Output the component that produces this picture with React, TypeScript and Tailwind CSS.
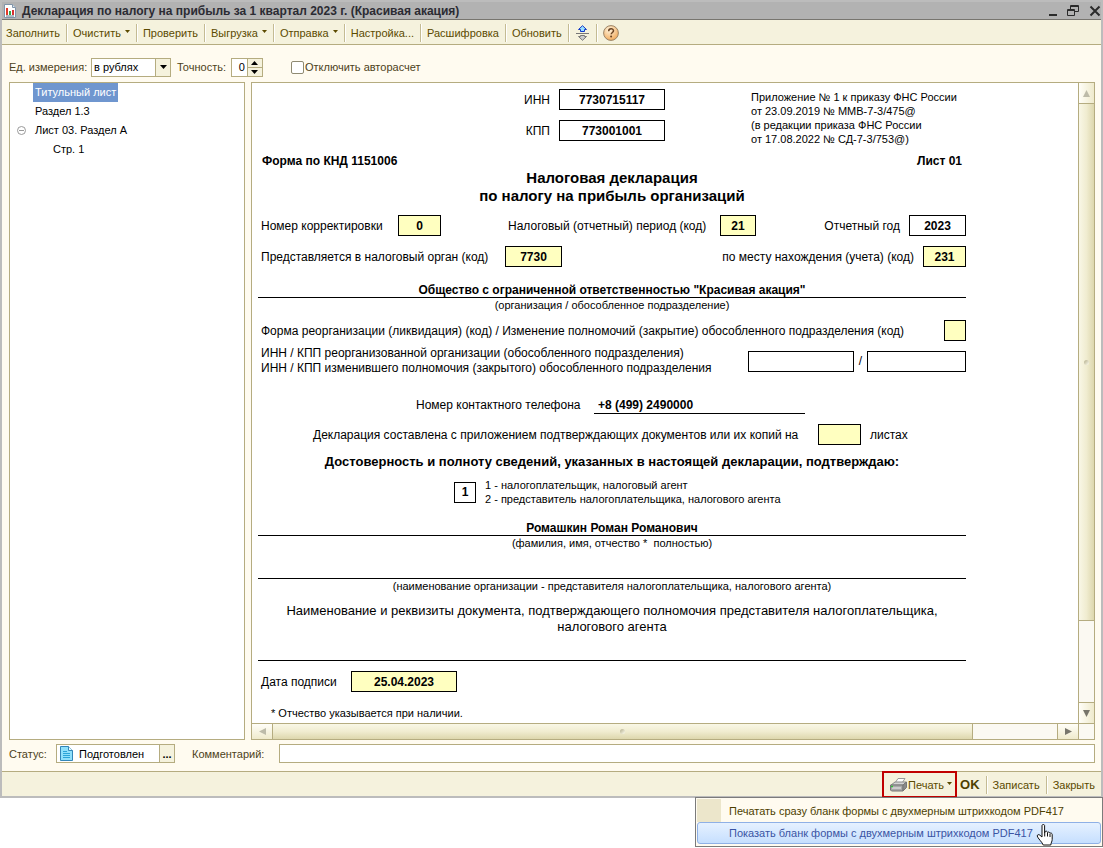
import React from 'react';

const Caret = () => (
  <svg className="mt-1 h-[3px] w-[5px] shrink-0 self-start fill-[#5b4a00]" viewBox="0 0 5 3">
    <path d="M0 0h5L2.5 3z" />
  </svg>
);

function ToolButton({ children, menu = false, last = false, label }: { children: React.ReactNode; menu?: boolean; last?: boolean; label?: string }) {
  return (
    <>
      <button aria-label={label} className="flex items-center gap-1 whitespace-nowrap pr-[6px] pl-[5px] text-[#5b4a00]">
        {children}
        {menu && <Caret />}
      </button>
      {!last && <span className="h-[18px] w-[2px] border-r border-white bg-[#c4bb93]" />}
    </>
  );
}

const tone = { white: 'bg-white', yellow: 'bg-[#ffffc0]' };

function Box({ label, value = '', width, color = 'white' }: { label: string; value?: string; width: string; color?: 'white' | 'yellow' }) {
  return (
    <input
      aria-label={label}
      defaultValue={value}
      className={`h-[21px] shrink-0 border border-black p-0 text-center font-bold text-black outline-none ${width} ${tone[color]}`}
    />
  );
}

function Arrow({ d, off = false }: { d: string; off?: boolean }) {
  return (
    <svg className="size-[9px]" viewBox="0 0 9 9">
      <path d={d} className={off ? 'fill-[#bdbba9]' : 'fill-[#77756b]'} />
    </svg>
  );
}

export default function App() {
  return (
    <div className="min-h-screen bg-white font-['Liberation_Sans',Arial,sans-serif] text-[11px] leading-[14px] text-black">
      <div className="border-2 border-[#bcbcbc] bg-[#fffbf0]">
        <header className="flex h-[18px] items-center border-b border-[#77756f] bg-[#b2b2b2] pl-[2px] text-[#2b2b33]">
          <svg className="h-[14px] w-[12px]" viewBox="0 0 12 14">
            <path d="M.5 .5h8l3 3v10H.5z" fill="#fff" stroke="#8094a8" />
            <path d="M8.500 .5v3h3" fill="#d8e4f0" stroke="#8094a8" />
            <path d="M2 4h2v7H2z" fill="#e03a28" />
            <path d="M5 7h2v4H5z" fill="#2fa84a" />
            <path d="M8 6h2v5H8z" fill="#d83030" />
            <path d="M2 12h8" stroke="#5f7488" />
          </svg>
          <h1 className="ml-[6px] flex-1 whitespace-nowrap text-[12px] font-bold">Декларация по налогу на прибыль за 1 квартал 2023 г. (Красивая акация)</h1>
          <div className="flex items-center">
            <button aria-label="Свернуть" className="mr-[8px]">
              <svg className="size-3" viewBox="0 0 12 12"><path d="M2 9h8v2H2z" fill="#2b2b2b" /></svg>
            </button>
            <button aria-label="Восстановить" className="mr-[10px]">
              <svg className="size-3" viewBox="0 0 12 12" fill="none" stroke="#2b2b2b">
                <path d="M3.500 4V.5h8v6H8M3 1.500h9M.5 4.500h7v6h-7zM0 5.500h8" />
              </svg>
            </button>
            <button aria-label="Закрыть">
              <svg className="size-3" viewBox="0 0 12 12"><path d="M1.500 1.500l9 9M10.500 1.500l-9 9" stroke="#2b2b2b" strokeWidth="2" /></svg>
            </button>
          </div>
        </header>

        <nav className="flex h-[25px] items-center border-b border-[#b5ac80] bg-[#f5f2dd] pt-px">
          <div className="-ml-px flex items-center">
            <ToolButton>Заполнить</ToolButton>
            <ToolButton menu>Очистить</ToolButton>
            <ToolButton>Проверить</ToolButton>
            <ToolButton menu>Выгрузка</ToolButton>
            <ToolButton menu>Отправка</ToolButton>
            <ToolButton>Настройка...</ToolButton>
            <ToolButton>Расшифровка</ToolButton>
            <ToolButton>Обновить</ToolButton>
            <ToolButton label="Развернуть">
              <svg className="h-4 w-[15px]" viewBox="0 0 15 16">
                <path d="M7.500 .7L11.500 4.500H9.500v2h-4v-2h-2z" fill="#9be0ff" stroke="#1238c8" />
                <path d="M1 8.500h13" stroke="#777" />
                <path d="M5.500 10.500h4v1h2l-4 3.800-4-3.800h2z" fill="#ccc" stroke="#777" />
              </svg>
            </ToolButton>
            <ToolButton last label="Справка">
              <svg className="size-4" viewBox="0 0 16 16">
                <defs>
                  <radialGradient id="help" cx=".4" cy=".3" r=".8">
                    <stop offset="0" stopColor="#fff3dc" />
                    <stop offset="1" stopColor="#f0a24c" />
                  </radialGradient>
                </defs>
                <circle cx="8" cy="8" r="7.400" fill="url(#help)" stroke="#9a8468" />
                <path d="M5.700 6.200c0-3.200 4.800-3.200 4.800-.4 0 1.700-2.300 1.700-2.300 3.500" fill="none" stroke="#6a4322" strokeWidth="1.500" />
                <circle cx="8.100" cy="11.600" r="1" fill="#6a4322" />
              </svg>
            </ToolButton>
          </div>
        </nav>

        <main className="pr-[6px] pb-[8px] pl-[7px]">
          <div className="flex h-[37px] items-center pt-[7px] text-[#4d4220]">
            <label htmlFor="unit" className="w-[82px] whitespace-nowrap">Ед. измерения:</label>
            <div className="relative flex h-[19px] w-[80px] border border-[#b5ac80] bg-white text-black">
              <select id="unit" className="w-full appearance-none pl-[2px] outline-none">
                <option>в рублях</option>
              </select>
              <span className="pointer-events-none absolute inset-y-0 right-0 flex w-[15px] items-center justify-center border-l border-[#b5ac80] bg-[#f5f2dd]">
                <svg className="h-1 w-[7px]" viewBox="0 0 7 4"><path d="M0 0h7L3.500 4z" /></svg>
              </span>
            </div>
            <label htmlFor="precision" className="ml-[6px]">Точность:</label>
            <div className="ml-[5px] flex h-[19px] w-[32px] border border-[#b5ac80] bg-white text-black">
              <input id="precision" defaultValue="0" className="w-[15px] p-0 pr-[2px] text-right outline-none" />
              <div className="flex flex-1 flex-col border-l border-[#b5ac80] bg-[#f5f2dd]">
                <button aria-label="Больше" className="flex flex-1 items-center justify-center border-b border-[#b5ac80]">
                  <svg className="h-1 w-[7px]" viewBox="0 0 7 4"><path d="M0 4h7L3.500 0z" /></svg>
                </button>
                <button aria-label="Меньше" className="flex flex-1 items-center justify-center">
                  <svg className="h-1 w-[7px]" viewBox="0 0 7 4"><path d="M0 0h7L3.500 4z" /></svg>
                </button>
              </div>
            </div>
            <label className="ml-[28px] flex items-center gap-px">
              <input type="checkbox" className="size-[13px] appearance-none rounded-[2px] border border-[#8f8a72] bg-white" />
              Отключить авторасчет
            </label>
          </div>

          <div className="flex h-[658px] gap-[6px]">
            <ul className="w-[236px] shrink-0 border border-[#b5ac80] bg-white pl-[23px] leading-[19px]">
              <li><button className="bg-[#6f96cf] px-[2px] text-white">Титульный лист</button></li>
              <li><button className="px-[2px]">Раздел 1.3</button></li>
              <li className="relative">
                <svg className="absolute top-[5px] -left-4 size-[9px]" viewBox="0 0 9 9" fill="none" stroke="#999">
                  <circle cx="4.500" cy="4.500" r="4" />
                  <path d="M2 4.500h5" />
                </svg>
                <button className="px-[2px]">Лист 03. Раздел А</button>
                <ul className="pl-[18px]">
                  <li><button className="px-[2px]">Стр. 1</button></li>
                </ul>
              </li>
            </ul>

            <div className="grid min-w-0 flex-1 grid-cols-[1fr_16px] grid-rows-[1fr_16px] border border-[#b5ac80] bg-white">
              <div className="overflow-hidden pl-[6px] text-[12px]">
                <form className="w-[708px] pt-[6px]">
                  <div className="flex h-[66px] justify-end">
                    <div className="mr-[86px] flex flex-col items-end gap-[10px]">
                      <label className="flex items-center gap-[9px]">ИНН<Box label="ИНН" value="7730715117" width="w-[106px]" /></label>
                      <label className="flex items-center gap-[9px]">КПП<Box label="КПП" value="773001001" width="w-[106px]" /></label>
                    </div>
                    <p className="w-[215px] pt-px text-[11px]">
                      Приложение № 1 к приказу ФНС России<br />
                      от 23.09.2019 № ММВ-7-3/475@<br />
                      (в редакции приказа ФНС России<br />
                      от 17.08.2022 № СД-7-3/753@)
                    </p>
                  </div>
                  <div className="flex justify-between pr-1 pl-1 font-bold leading-[12px]">
                    <span>Форма по КНД 1151006</span>
                    <span>Лист 01</span>
                  </div>
                  <h2 className="mt-[2px] text-center text-[15px] leading-[18px] font-bold">
                    Налоговая декларация<br />по налогу на прибыль организаций
                  </h2>
                  <div className="mt-[10px] flex pl-[3px]">
                    <label className="flex items-center"><span className="w-[137px]">Номер корректировки</span><Box label="Номер корректировки" value="0" width="w-[43px]" color="yellow" /></label>
                    <label className="ml-[67px] flex items-center"><span className="w-[212px]">Налоговый (отчетный) период (код)</span><Box label="Период" value="21" width="w-[36px]" color="yellow" /></label>
                    <label className="ml-auto flex items-center gap-[9px]">Отчетный год<Box label="Отчетный год" value="2023" width="w-[57px]" /></label>
                  </div>
                  <div className="mt-[10px] flex justify-between pl-[3px]">
                    <label className="flex items-center"><span className="w-[244px]">Представляется в налоговый орган (код)</span><Box label="Налоговый орган" value="7730" width="w-[57px]" color="yellow" /></label>
                    <label className="flex items-center gap-[9px]">по месту нахождения (учета) (код)<Box label="Место нахождения" value="231" width="w-[43px]" color="yellow" /></label>
                  </div>
                  <p className="mt-[16px] border-b border-black text-center font-bold">Общество с ограниченной ответственностью "Красивая акация"</p>
                  <p className="text-center text-[11px]">(организация / обособленное подразделение)</p>
                  <label className="mt-[8px] flex items-center justify-between pl-[3px]">
                    Форма реорганизации (ликвидация) (код) / Изменение полномочий (закрытие) обособленного подразделения (код)
                    <Box label="Форма реорганизации" width="w-[22px]" color="yellow" />
                  </label>
                  <div className="mt-[5px] flex items-center pl-[3px]">
                    <p className="flex-1 leading-[15px]">
                      ИНН / КПП реорганизованной организации (обособленного подразделения)<br />
                      ИНН / КПП изменившего полномочия (закрытого) обособленного подразделения
                    </p>
                    <Box label="ИНН реорганизованной организации" width="w-[106px]" />
                    <span className="w-[13px] text-center">/</span>
                    <Box label="КПП реорганизованной организации" width="w-[99px]" />
                  </div>
                  <label className="mt-[20px] ml-[158px] flex h-[18px] items-center">
                    <span className="w-[178px]">Номер контактного телефона</span>
                    <input defaultValue="+8 (499) 2490000" className="h-[17px] w-[211px] self-end border-b border-black p-0 pl-1 font-bold outline-none" />
                  </label>
                  <label className="mt-[10px] ml-[55px] flex items-center">
                    <span className="w-[505px]">Декларация составлена с приложением подтверждающих документов или их копий на</span>
                    <Box label="Количество листов" width="w-[43px]" color="yellow" />
                    <span className="ml-[9px]">листах</span>
                  </label>
                  <p className="mt-[10px] text-center text-[13px] font-bold">Достоверность и полноту сведений, указанных в настоящей декларации, подтверждаю:</p>
                  <div className="mt-[9px] ml-[196px] flex items-center gap-[9px]">
                    <Box label="Кем подтверждается" value="1" width="w-[22px]" />
                    <p className="text-[11px]">1 - налогоплательщик, налоговый агент<br />2 - представитель налогоплательщика, налогового агента</p>
                  </div>
                  <p className="mt-[15px] border-b border-black text-center font-bold">Ромашкин Роман Романович</p>
                  <p className="text-center text-[11px]">(фамилия, имя, отчество *&nbsp; полностью)</p>
                  <div className="h-[29px] border-b border-black" />
                  <p className="text-center text-[11px]">(наименование организации - представителя налогоплательщика, налогового агента)</p>
                  <p className="mt-[10px] px-[20px] text-center text-[13px] leading-[16px]">
                    Наименование и реквизиты документа, подтверждающего полномочия представителя налогоплательщика, налогового агента
                  </p>
                  <div className="h-[26px] border-b border-black" />
                  <label className="mt-[10px] flex items-center pl-[3px]"><span className="w-[90px]">Дата подписи</span><Box label="Дата подписи" value="25.04.2023" width="w-[106px]" color="yellow" /></label>
                  <p className="mt-[14px] pl-[13px] text-[11px]">* Отчество указывается при наличии.</p>
                </form>
              </div>

              <div className="flex flex-col border-l border-[#b5ac80] bg-[#fbf9f2]">
                <button aria-label="Вверх" className="flex h-[21px] items-center justify-center border-b border-[#b5ac80] bg-linear-to-r from-[#fffef8] to-[#efeacc]"><Arrow d="M4.500 1L8 8H1z" off /></button>
                <div className="flex h-[517px] items-center justify-center border-b border-[#b5ac80] bg-linear-to-r from-[#f9f7e6] via-[#f0ecd0] to-[#ddd7ad]"><span className="size-[5px] rounded-full bg-linear-to-br from-[#b3ad8c] to-[#fffef0]" /></div>
                <div className="flex-1" />
                <button aria-label="Вниз" className="flex h-[21px] items-center justify-center border-t border-[#b5ac80] bg-linear-to-r from-[#fffef8] to-[#efeacc]"><Arrow d="M4.500 8L8 1H1z" /></button>
              </div>

              <div className="flex border-t border-[#b5ac80] bg-[#fbf9f2]">
                <button aria-label="Влево" className="flex w-[21px] items-center justify-center border-r border-[#b5ac80] bg-linear-to-b from-[#fffef8] to-[#efeacc]"><Arrow d="M1 4.500L8 1v7z" off /></button>
                <div className="flex w-[700px] items-center justify-center border-r border-[#b5ac80] bg-linear-to-b from-[#f9f7e6] via-[#f0ecd0] to-[#ddd7ad]"><span className="size-[5px] rounded-full bg-linear-to-br from-[#b3ad8c] to-[#fffef0]" /></div>
                <div className="flex-1" />
                <button aria-label="Вправо" className="flex w-[21px] items-center justify-center border-l border-[#b5ac80] bg-linear-to-b from-[#fffef8] to-[#efeacc]"><Arrow d="M8 4.500L1 1v7z" /></button>
              </div>
              <div className="border-t border-l border-[#b5ac80] bg-[#fbf9f2]" />
            </div>
          </div>

          <div className="mt-[4px] flex h-[19px] items-center text-[#4d4220]">
            <label htmlFor="status" className="w-[47px]">Статус:</label>
            <div className="flex h-[19px] w-[119px] items-center border border-[#b5ac80] bg-white text-black">
              <svg className="ml-[3px] h-[15px] w-[13px] shrink-0" viewBox="0 0 13 15">
                <path d="M.5 .5h8l4 4v10H.5z" fill="#8fe0fb" stroke="#3386b8" />
                <path d="M8.500 .5v4h4" fill="#eafaff" stroke="#3386b8" />
                <path d="M3 5.500h4M3 7.500h7M3 9.500h7M3 11.500h7" stroke="#2aa4d8" />
              </svg>
              <input id="status" defaultValue="Подготовлен" className="min-w-0 flex-1 pl-[6px] outline-none" />
              <button aria-label="Выбрать" className="h-full w-[15px] border-l border-[#b5ac80] bg-[#f5f2dd] font-bold">...</button>
            </div>
            <label htmlFor="comment" className="ml-[17px] w-[87px]">Комментарий:</label>
            <input id="comment" className="h-[19px] min-w-0 flex-1 border border-[#b5ac80] bg-white px-1 text-black outline-none" />
          </div>
        </main>

        <footer className="relative flex h-[25px] items-center justify-end border-t border-[#b5ac80] bg-[#f5f2dd] pt-px">
          <button className="-my-1 flex h-[27px] items-center gap-px border-2 border-[#c00000] pr-[3px] pl-[6px] text-[#5b4a00]">
            <svg className="h-[14px] w-[17px]" viewBox="0 0 17 14">
              <path d="M5 5l3-4.500h7L12 5z" fill="#fff" stroke="#999" />
              <path d="M1 7l4-3h11l-3 3z" fill="#d4d4d4" stroke="#8a8a8a" />
              <path d="M.5 7h12.500v6H1.500l-1-1z" fill="#a8a8a8" stroke="#777" />
              <path d="M13 7l3.500-3v5.500L13 13z" fill="#8a8a8a" stroke="#777" />
              <path d="M2 10h9" stroke="#eee" />
              <path d="M1 8.500h2" stroke="#35c13b" strokeWidth="1.500" />
            </svg>
            <span className="flex gap-[3px]">Печать<Caret /></span>
          </button>
          <button className="pr-[6px] pl-[3px] text-[13px] font-bold text-[#4d3f00]">OK</button>
          <span className="h-[18px] w-[2px] border-r border-white bg-[#c4bb93]" />
          <ToolButton>Записать</ToolButton>
          <ToolButton last>Закрыть</ToolButton>

          <div role="menu" className="absolute top-full -right-[2px] z-10 mt-px w-[408px] border border-[#7b7b7b] bg-[#fffbf0] px-px pt-px pb-[2px]">
            <button role="menuitem" className="flex h-[23px] w-full items-center text-[#4d3f00]">
              <span className="mr-[8px] h-full w-[24px] bg-[#ece6cb]" />
              Печатать сразу бланк формы с двухмерным штрихкодом PDF417
            </button>
            <button role="menuitem" className="flex h-[22px] w-full items-center rounded-[3px] border border-[#8fb0e6] bg-linear-to-b from-[#e6f1ff] to-[#c6dffe] pl-[31px] text-[#3a55a4]">
              Показать бланк формы с двухмерным штрихкодом PDF417
            </button>
            <svg className="absolute top-[26px] left-[340px] h-[24px] w-[20px]" viewBox="0 0 20 24">
              <path d="M6 1.500c0-1.300 2.600-1.300 2.600 0V9l.6-1.500c.8-.8 2.200-.2 2.300 1 .9-1 2.300-.3 2.400.8 1-.7 2.300 0 2.300 1.200v5c0 2-1.200 3-1.400 5.500H7.200C6.500 18.500 1.500 14 1.200 12c0-1.400 1.600-1.800 2.700-.8L6 13z" fill="#fff" stroke="#111" />
              <path d="M8.700 9v3.500M11.500 9v3.500M14 10v3" stroke="#111" />
            </svg>
          </div>
        </footer>
      </div>
    </div>
  );
}
